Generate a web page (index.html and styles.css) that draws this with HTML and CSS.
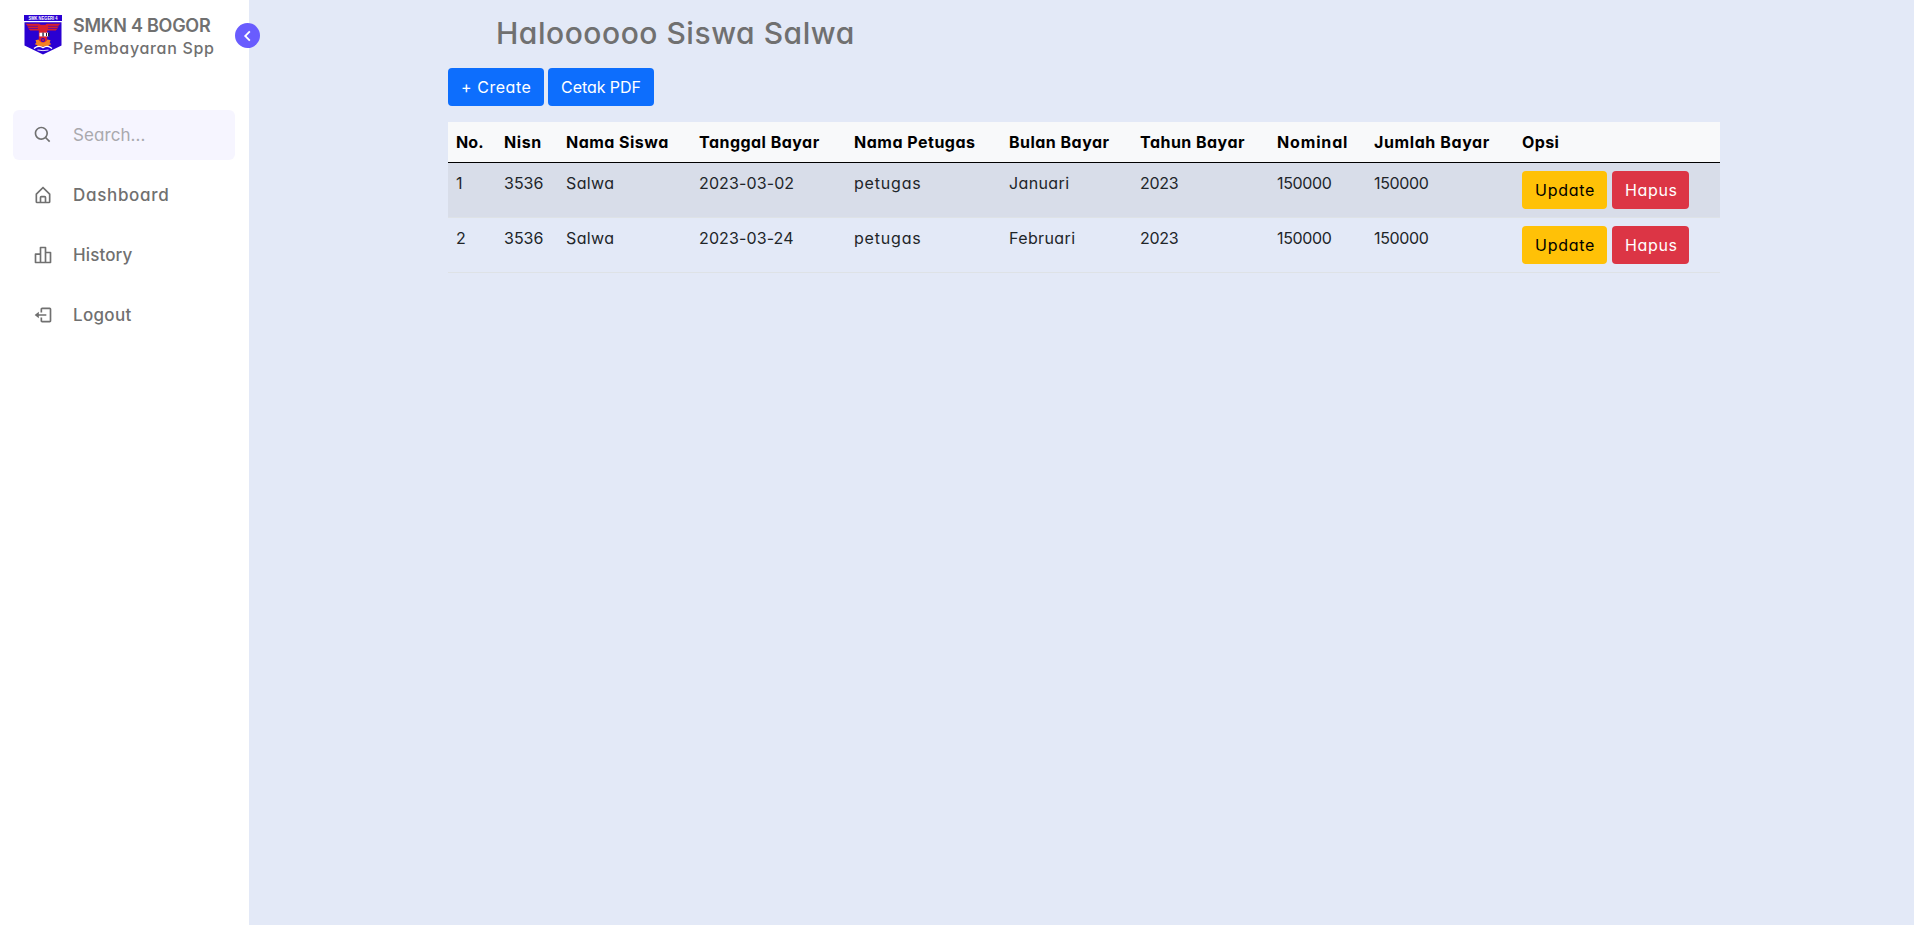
FILE: index.html
```html
<!DOCTYPE html>
<html lang="id">
<head>
<meta charset="utf-8">
<title>Pembayaran Spp</title>
<link rel="stylesheet" href="styles.css">
</head>
<body>
<nav class="sidebar">
  <header class="brand">
    <svg class="logo" viewBox="0 0 38 40">
      <path fill="#2a00d2" d="M0 0h38v6H0z"/>
      <path fill="#2a00d2" d="M.5 7.3h37v23.2L19 39.6.5 30.5z"/>
      <text class="logo-text" x="19" y="4.8" text-anchor="middle" textLength="29" lengthAdjust="spacingAndGlyphs">SMK NEGERI 4</text>
      <path fill="#d8202c" d="M1.5 8.7h13.2q1.2 0 1.8 1h5q.6-1 1.8-1h13.2l-2.6 2.5h1.2l-2.3 2.2h1l-2 2.1h-8.600v9.500q0 3-4.200 3t-4.200-3v-9.500H6.200l-2-2.100h1l-2.300-2.200h1.200z"/>
      <path stroke="#2a00d2" stroke-width=".6" d="M3 11.3h11M5 13.5h9M24 11.3h11M24 13.5h9"/>
      <path fill="#fff" d="M15.5 17.7H25v3.7h-9.5z"/>
      <path fill="#221a38" d="M18.4 17.5h1.3v4h-1.3zM22 18h1v3h-1zM24 17.5h1.400v4H24z"/>
      <path fill="#f58220" d="M11.500 25.200l3-.7 1.300 1.800q3.200 2.500 6.400 0l1.300-1.800 3 .7-.8 2.200 1.500 1.800-2.200.8-.7 1.800H13.700l-.7-1.800-2.200-.8 1.500-1.800z"/>
      <circle cx="19" cy="25" r="2" fill="#2a00d2"/>
      <circle cx="19" cy="25" r="1.100" fill="#d8202c"/>
      <path fill="none" stroke="#fff" stroke-width="1.300" d="M10 33.500q4.500-4 9-.7 4.500-3.300 9 .7"/>
      <path fill="none" stroke="#fff" stroke-width=".9" d="M13.500 35q5.500 1.300 11 0"/>
    </svg>
    <div class="brand-text">
      <span class="brand-name">SMKN 4 BOGOR</span>
      <span class="brand-sub">Pembayaran Spp</span>
    </div>
    <span class="toggle"><svg viewBox="0 0 24 24"><path d="M13.293 6.293 7.586 12l5.707 5.707 1.414-1.414L10.414 12l4.293-4.293z"/></svg></span>
  </header>
  <div class="menu">
    <div class="item search">
      <svg class="icon" viewBox="0 0 24 24"><path d="M10 18a7.952 7.952 0 0 0 4.897-1.688l4.396 4.396 1.414-1.414-4.396-4.396A7.952 7.952 0 0 0 18 10c0-4.411-3.589-8-8-8s-8 3.589-8 8 3.589 8 8 8zm0-14c3.309 0 6 2.691 6 6s-2.691 6-6 6-6-2.691-6-6 2.691-6 6-6z"/></svg>
      <span class="hint">Search...</span>
    </div>
    <a class="item">
      <svg class="icon" viewBox="0 0 24 24"><path d="M5 22h14a2 2 0 0 0 2-2v-9a1 1 0 0 0-.29-.71l-8-8a1 1 0 0 0-1.410 0l-8 8A1 1 0 0 0 3 11v9a2 2 0 0 0 2 2zm5-2v-5h4v5zm-5-8.590 7-7 7 7V20h-3v-5a2 2 0 0 0-2-2h-4a2 2 0 0 0-2 2v5H5z"/></svg>
      <span class="dashboard">Dashboard</span>
    </a>
    <a class="item">
      <svg class="icon line" viewBox="0 0 24 24"><path d="M9 11H3v10h6M9 3h6v18H9zM15 9h6v12h-6"/></svg>
      <span class="history">History</span>
    </a>
    <a class="item">
      <svg class="icon" viewBox="0 0 24 24"><path d="m2 12 5 4v-3h9v-2H7V8z"/><path d="M20 3h-9c-1.103 0-2 .897-2 2v4h2V5h9v14h-9v-4H9v4c0 1.103.897 2 2 2h9c1.103 0 2-.897 2-2V5c0-1.103-.897-2-2-2z"/></svg>
      <span class="logout">Logout</span>
    </a>
  </div>
</nav>
<main class="home">
  <h1 class="title">Haloooooo Siswa Salwa</h1>
  <div class="content">
    <div class="actions">
      <a class="btn primary create">+ Create</a>
      <a class="btn primary print">Cetak PDF</a>
    </div>
    <table class="table">
      <colgroup><col class="c-no"><col class="c-nisn"><col class="c-nama"><col class="c-tanggal"><col class="c-petugas"><col class="c-bulan"><col class="c-tahun"><col class="c-nominal"><col class="c-jumlah"><col></colgroup>
      <thead>
        <tr><th class="no">No.</th><th class="nisn">Nisn</th><th class="tight">Nama Siswa</th><th class="tight">Tanggal Bayar</th><th>Nama Petugas</th><th class="tight">Bulan Bayar</th><th class="tight">Tahun Bayar</th><th class="nominal">Nominal</th><th class="wide">Jumlah Bayar</th><th class="opsi">Opsi</th></tr>
      </thead>
      <tbody>
        <tr><td>1</td><td>3536</td><td class="name">Salwa</td><td class="date">2023-03-02</td><td class="officer">petugas</td><td class="month">Januari</td><td class="year">2023</td><td class="amount">150000</td><td class="amount">150000</td><td><div class="options"><a class="btn warning">Update</a><a class="btn danger">Hapus</a></div></td></tr>
        <tr><td>2</td><td>3536</td><td class="name">Salwa</td><td class="date">2023-03-24</td><td class="officer">petugas</td><td class="month">Februari</td><td class="year">2023</td><td class="amount">150000</td><td class="amount">150000</td><td><div class="options"><a class="btn warning">Update</a><a class="btn danger">Hapus</a></div></td></tr>
      </tbody>
    </table>
  </div>
</main>
</body>
</html>
```
FILE: styles.css
```css
* { box-sizing: border-box; margin: 0; padding: 0; }

body {
  display: flex;
  min-height: 100vh;
  background: #e3e9f7;
  color: #212529;
  font: 400 16px/24px Inter, "Open Sans", sans-serif;
  font-feature-settings: "cv11";
}

/* Sidebar */
.sidebar {
  flex: none;
  width: 249px;
  padding: 15px 14px 0 13px;
  background: #fff;
  color: #707070;
}

.brand {
  position: relative;
  display: flex;
  height: 95px;
  padding-left: 11px;
}

.logo { width: 38px; height: 40px; overflow: visible; }

.logo-text {
  fill: #fff;
  font: 700 4.8px "Liberation Sans", sans-serif;
}

.brand-text {
  display: flex;
  flex-direction: column;
  padding-left: 11px;
  margin-top: -2px;
  white-space: nowrap;
}

.brand-name { font-size: 18px; font-weight: 600; line-height: 25px; letter-spacing: -0.25px; }
.brand-sub { font-weight: 500; line-height: 21px; letter-spacing: 0.67px; }

.toggle {
  position: absolute;
  top: 8px;
  right: -25px;
  display: flex;
  align-items: center;
  justify-content: center;
  width: 25px;
  height: 25px;
  border-radius: 50%;
  background: #695cfe;
}

.toggle svg { width: 22px; height: 22px; fill: #fff; }

.menu { display: flex; flex-direction: column; gap: 10px; }

.item {
  display: flex;
  align-items: center;
  height: 50px;
  padding-left: 20px;
  border-radius: 6px;
  font-size: 17px;
  font-weight: 500;
}

.search { background: #f6f5ff; }
.hint { color: #a9a9ad; font-weight: 400; letter-spacing: 0.07px; }
.dashboard { letter-spacing: 0.68px; }
.history { letter-spacing: 0.11px; }
.logout { letter-spacing: 0.32px; }

.icon {
  width: 20px;
  height: 20px;
  margin-right: 20px;
  fill: currentColor;
}

.icon.line {
  fill: none;
  stroke: currentColor;
  stroke-width: 2;
  stroke-linejoin: round;
}

/* Main area */
.home { flex: 1; padding-top: 11px; }

.title {
  padding-left: 247px;
  margin-bottom: 12px;
  color: #707070;
  font-size: 30px;
  font-weight: 500;
  line-height: 45px;
  letter-spacing: 0.53px;
}

.content { width: 1272px; margin-left: 199px; }
.actions { display: flex; gap: 4px; margin-bottom: 16px; }

.btn {
  display: block;
  height: 38px;
  padding: 7px 0 7px 13px;
  border-radius: 4px;
  white-space: nowrap;
}

.primary { background: #0d6efd; color: #fff; }
.create { width: 96px; letter-spacing: 0.54px; }
.print { width: 106px; letter-spacing: -0.05px; }
.warning { width: 85px; background: #ffc107; color: #000; letter-spacing: 0.72px; }
.danger { width: 77px; background: #dc3545; color: #fff; letter-spacing: 0.65px; }

/* Payments table */
.table {
  width: 1272px;
  table-layout: fixed;
  border-collapse: separate;
  border-spacing: 0;
}

.c-no { width: 48px; }
.c-nisn { width: 62px; }
.c-nama { width: 133px; }
.c-tanggal { width: 155px; }
.c-petugas { width: 155px; }
.c-bulan { width: 131px; }
.c-tahun { width: 137px; }
.c-nominal { width: 97px; }
.c-jumlah { width: 148px; }

th, td {
  padding: 8px 0 8px 8px;
  text-align: left;
  vertical-align: top;
  white-space: nowrap;
}

th {
  background: #f8f9fa;
  border-bottom: 1px solid #000;
  color: #000;
  font-weight: 700;
  letter-spacing: 0.5px;
}

td { border-bottom: 1px solid #dee2e6; }
tbody tr:nth-child(odd) td { background: #d8dde9; }

.no { letter-spacing: 0.1px; }
.nisn { letter-spacing: 0.6px; }
.tight { letter-spacing: 0.47px; }
.wide { letter-spacing: 0.6px; }
.nominal { letter-spacing: 0.85px; }
.opsi { letter-spacing: 0.38px; }
.name { letter-spacing: 0.36px; }
.date { letter-spacing: 0.12px; }
.officer { letter-spacing: 0.8px; }
.month { letter-spacing: 0.38px; }
.year { letter-spacing: -0.3px; }
.amount { letter-spacing: -0.35px; }

.options { display: flex; gap: 5px; }
```
